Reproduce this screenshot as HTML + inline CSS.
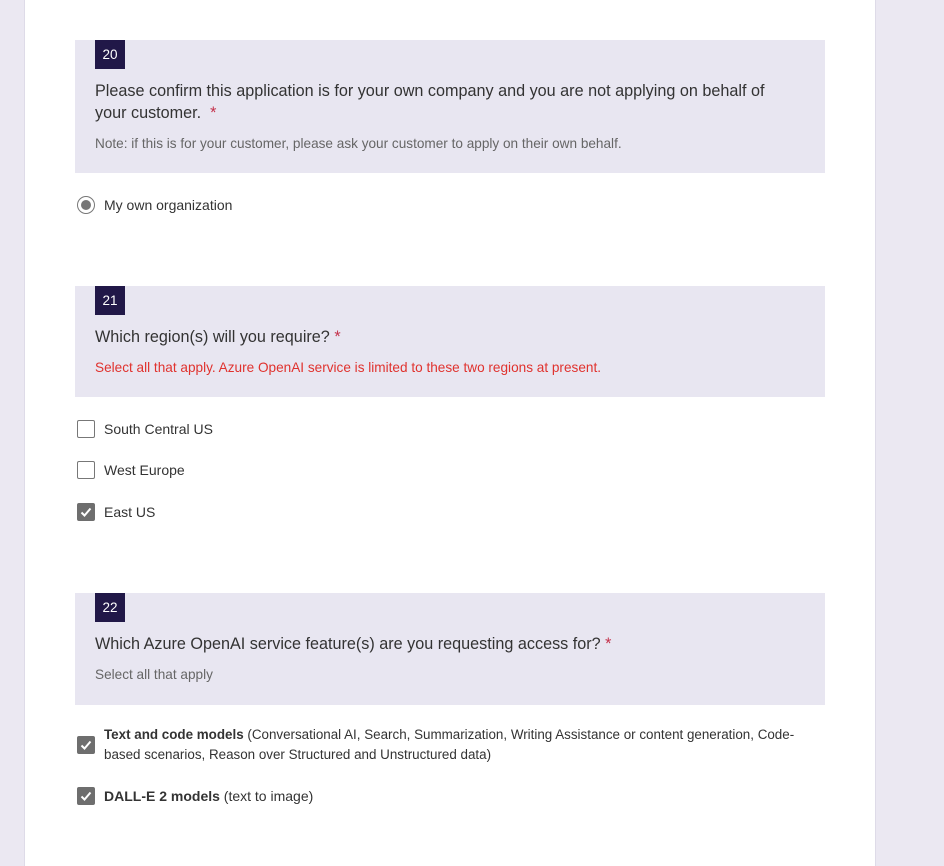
<!DOCTYPE html>
<html><head><style>
body{margin:0;width:944px;height:866px;background:#ebe8f2;font-family:"Liberation Sans",sans-serif;position:relative;overflow:hidden}
.card{position:absolute;left:24px;top:0;width:850px;height:866px;background:#fff;border-left:1px solid #dedbe8;border-right:1px solid #dedbe8}
.q{position:absolute;left:75px;width:750px;background:#e8e6f1}
.badge{position:absolute;left:20px;top:0;width:30px;height:29px;background:#211848;color:#fff;font-size:13.5px;line-height:29px;text-align:center}
.t{position:absolute;left:20px;font-size:16.2px;color:#333;line-height:22px;width:712px}
.n{position:absolute;left:20px;font-size:13.6px;color:#666}
.red{color:#e0322e}
.ast{color:#c4314b}
.opt{position:absolute;left:77px;font-size:14px;color:#333;line-height:20px}
.cb{position:absolute;left:0;width:16px;height:16px;border:1px solid #777;border-radius:2px;box-sizing:border-box;background:#fff}
.cb.on{background:#6e6e6e;border-color:#6e6e6e}
.cb.on svg{position:absolute;left:2px;top:2px}
.lab{position:absolute;left:27px;white-space:nowrap}
</style></head><body>
<div class="card"></div>

<div class="q" style="top:40px;height:133px">
<div class="badge">20</div>
<div class="t" style="top:40px">Please confirm this application is for your own company and you are not applying on behalf of<br>your customer. &nbsp;<span class="ast">*</span></div>
<div class="n" style="top:96px">Note: if this is for your customer, please ask your customer to apply on their own behalf.</div>
</div>
<div class="opt" style="top:195px"><div style="position:absolute;left:0;top:1px;width:18px;height:18px;border:1px solid #777;border-radius:50%;box-sizing:border-box"><div style="position:absolute;left:3px;top:3px;width:10px;height:10px;border-radius:50%;background:#777"></div></div><span class="lab">My own organization</span></div>

<div class="q" style="top:286px;height:111px">
<div class="badge">21</div>
<div class="t" style="top:40px">Which region(s) will you require? <span class="ast">*</span></div>
<div class="n red" style="top:74px">Select all that apply. Azure OpenAI service is limited to these two regions at present.</div>
</div>
<div class="opt" style="top:419px"><div class="cb" style="top:1px;width:18px;height:18px"></div><span class="lab">South Central US</span></div>
<div class="opt" style="top:460px"><div class="cb" style="top:1px;width:18px;height:18px"></div><span class="lab">West Europe</span></div>
<div class="opt" style="top:502px"><div class="cb on" style="top:1px;width:18px;height:18px"><svg width="12" height="12" viewBox="0 0 12 12"><path d="M1.5 6.5 L4.5 9.5 L10.5 2.5" stroke="#fff" stroke-width="2" fill="none"/></svg></div><span class="lab">East US</span></div>

<div class="q" style="top:593px;height:112px">
<div class="badge">22</div>
<div class="t" style="top:40px">Which Azure OpenAI service feature(s) are you requesting access for? <span class="ast">*</span></div>
<div class="n" style="top:74px">Select all that apply</div>
</div>
<div class="opt" style="top:725px;width:745px"><div class="cb on" style="top:11px;width:18px;height:18px"><svg width="12" height="12" viewBox="0 0 12 12"><path d="M1.5 6.5 L4.5 9.5 L10.5 2.5" stroke="#fff" stroke-width="2" fill="none"/></svg></div><div style="margin-left:27px;white-space:normal;font-size:13.4px"><b>Text and code models</b> (Conversational AI, Search, Summarization, Writing Assistance or content generation, Code-based scenarios, Reason over Structured and Unstructured data)</div></div>
<div class="opt" style="top:786px"><div class="cb on" style="top:1px;width:18px;height:18px"><svg width="12" height="12" viewBox="0 0 12 12"><path d="M1.5 6.5 L4.5 9.5 L10.5 2.5" stroke="#fff" stroke-width="2" fill="none"/></svg></div><span class="lab"><b>DALL-E 2 models</b> (text to image)</span></div>
</body></html>
